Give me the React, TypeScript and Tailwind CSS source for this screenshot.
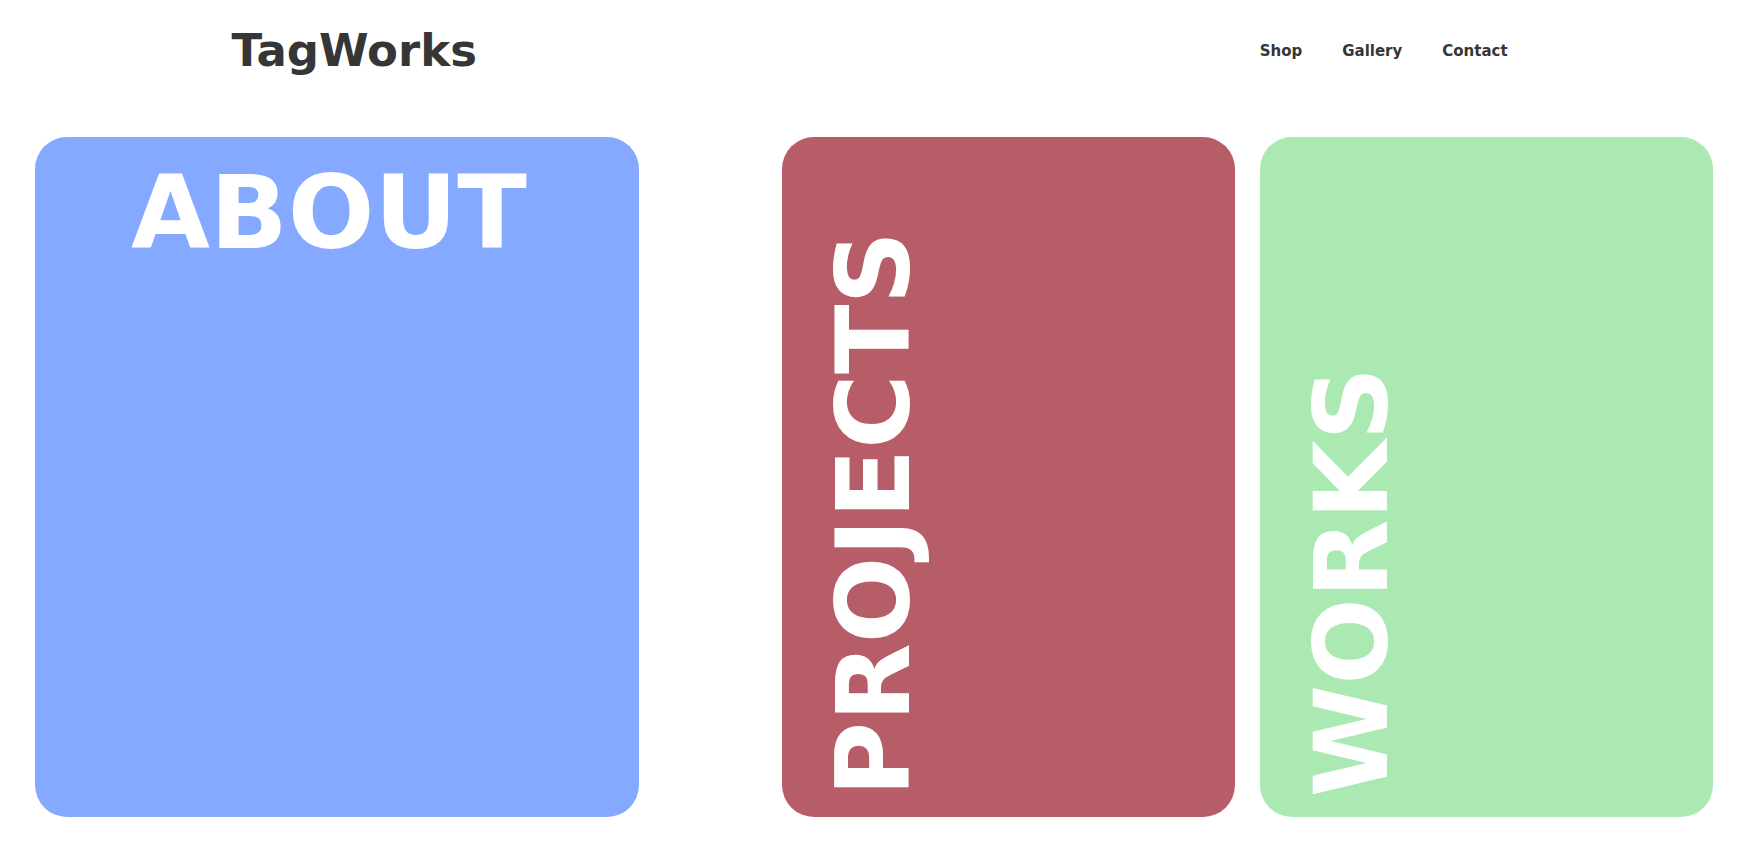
const navLinks = ["Shop", "Gallery", "Contact"];

const Header = () => {
    return (
        <header className="flex items-center justify-between pl-[13.25%] pr-[13.75%] pt-[21px] pb-14 text-[#363636]">
            <a href="#home" className="text-[45px] leading-[60px] font-bold">TagWorks</a>
            <nav className="flex items-center gap-10">
                {navLinks.map((link) => (
                    <a key={link} href={`#${link.toLowerCase()}`} className="text-[15px] leading-6 font-bold">
                        {link}
                    </a>
                ))}
            </nav>
        </header>
    )
}

const SideCard = ({ title, className }: { title: string; className: string }) => {
    return (
        <section className={`w-[27%] flex items-end rounded-[32px] pl-8 pb-5 ${className}`}>
            <h2 className="[writing-mode:vertical-rl] rotate-180 whitespace-nowrap text-[102px] leading-[120px] font-bold">
                {title}
            </h2>
        </section>
    )
}

const App = () => {
    return (
        <div className="min-h-screen flex flex-col bg-white font-['DejaVu_Sans',sans-serif]">
            <Header />
            <main className="flex-1 flex px-[2%] pb-[26px] text-white">
                <section className="w-[36%] mr-[8.5%] rounded-[32px] bg-[#85a9ff] pt-4 pr-4 text-center">
                    <h2 className="text-[102px] leading-[120px] font-bold">ABOUT</h2>
                </section>
                <SideCard title="PROJECTS" className="mr-[1.5%] bg-[#b65d68]" />
                <SideCard title="WORKS" className="bg-[#abe9b3]" />
            </main>
        </div>
    )
}

export default App
